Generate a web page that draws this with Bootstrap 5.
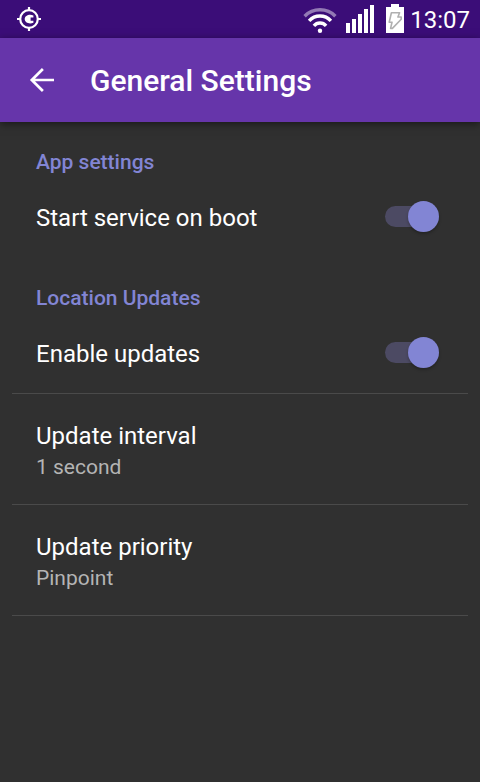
<!DOCTYPE html>
<html lang="en" data-bs-theme="dark">
<head>
<meta charset="utf-8">
<meta name="viewport" content="width=device-width, initial-scale=1">
<title>General Settings</title>
<link href="https://cdn.jsdelivr.net/npm/bootstrap@5.3.0/dist/css/bootstrap.min.css" rel="stylesheet">
<style>
  body { font-family: Roboto, "Noto Sans", sans-serif; background: #303030; color: #fff; }
  .status-bar { background: #3b0d78; height: 38px; padding: 0 10px 0 16px; }
  .status-icons { gap: 10px; }
  .wifi-signal { gap: 8px; }
  .battery-clock { gap: 5px; }
  .clock { font-size: 24px; line-height: 36px; padding-top: 2px; }
  .app-bar { background: #6635aa; height: 84px; padding: 0 28px; gap: 34px; box-shadow: 0 2px 8px rgba(0, 0, 0, .5); }
  .app-title { font-size: 30px; line-height: 36px; font-weight: 500; padding-top: 2px; }
  .back { color: #fff; line-height: 0; }
  .section-title { font-size: 21px; line-height: 30px; font-weight: 500; color: #8285d4; padding: 25px 24px 0; }
  .settings { padding: 0 12px; }
  .setting { border-bottom: 1px solid #4a4a4a; }
  .setting-last { border-color: transparent; }
  .toggle-row { min-height: 80px; padding: 0 29px 0 24px; }
  .toggle-row .setting-name { padding-top: 2px; }
  .setting-name { font-size: 24px; line-height: 32px; }
  .choice-row { padding: 26px 24px 22px; color: #fff; background: none; border: 0; }
  .choice-value { font-size: 21px; line-height: 30px; color: #b4b4b4; }
  .toggle { appearance: none; display: grid; align-items: center; width: 54px; height: 31px; margin: 0 0 2px; flex: none; }
  .toggle::before, .toggle::after { content: ""; grid-area: 1 / 1; }
  .toggle::before { width: 48px; height: 21px; border-radius: 11px; background: #4c4a63; }
  .toggle::after { width: 31px; height: 31px; border-radius: 50%; background: #8285d4; justify-self: end; box-shadow: 0 2px 3px rgba(0, 0, 0, .25); }
  .toggle:not(:checked)::after { justify-self: start; background: #bdbdbd; }
</style>
<script src="https://cdn.jsdelivr.net/npm/bootstrap@5.3.0/dist/js/bootstrap.bundle.min.js"></script>
</head>
<body>
<div class="status-bar d-flex align-items-center justify-content-between">
  <svg width="26" height="26" viewBox="0 0 26 26" fill="none" stroke="#fff" role="img" aria-label="Location active">
    <circle cx="13" cy="13" r="8.8" stroke-width="2.2"/>
    <path d="M13 1v4M13 21v4M1 13h4M21 13h4" stroke-width="2.2"/>
    <path d="M17.4 9.4C13.4 7.6 8.7 9.4 8.7 13.1S13.4 18.6 17.4 16.8V14.8H14.6V11.4H17.4Z" fill="#fff" stroke="none"/>
  </svg>
  <div class="status-icons d-flex align-items-center">
    <div class="wifi-signal d-flex align-items-center">
      <svg width="34" height="28" viewBox="0 0 34 28" fill="none" stroke="#fff" stroke-width="3.4" role="img" aria-label="Wi-Fi">
        <path d="M1.6 11.2C10 2.6 24 2.6 32.4 11.2" opacity=".45"/>
        <path d="M6.1 15.8C12 9.4 22 9.4 27.9 15.8M10.9 20.8C14.2 17 19.8 17 23.1 20.8"/>
        <circle cx="17" cy="25.8" r="2.2" fill="#fff" stroke="none"/>
      </svg>
      <svg width="30" height="28" viewBox="0 0 30 28" fill="#fff" role="img" aria-label="Signal">
        <path d="M1 18h4v10h-4zM7 14h4v14h-4zM13 9h4v19h-4zM19 4h4v24h-4zM25 0h4v28h-4z"/>
      </svg>
    </div>
    <div class="battery-clock d-flex align-items-center">
      <svg width="20" height="30" viewBox="0 0 20 30" role="img" aria-label="Battery charging">
        <path d="M6 0h8v3h5v26H1V3h5z" fill="#fff"/>
        <path d="M6.4 8.8H14.6L12.9 13H16.2V15.2L7.4 24.4H5.6L7 18.2H4.2Z" fill="none" stroke="#b0b0b0" stroke-width="1.6" stroke-linejoin="round"/>
      </svg>
      <span class="clock">13:07</span>
    </div>
  </div>
</div>
<header class="app-bar d-flex align-items-center">
  <a href="#" class="back" aria-label="Back">
    <svg width="28" height="28" viewBox="0 0 28 28" fill="none" stroke="currentColor" stroke-width="2.7"><path d="M26 14H4M14.9 3L3.8 14 14.9 25"/></svg>
  </a>
  <h1 class="app-title m-0">General Settings</h1>
</header>
<main class="settings">
  <section>
    <h2 class="section-title m-0">App settings</h2>
    <div class="setting setting-last">
      <div class="toggle-row d-flex align-items-center justify-content-between">
        <label class="setting-name" for="boot">Start service on boot</label>
        <input class="toggle" type="checkbox" role="switch" id="boot" checked>
      </div>
    </div>
  </section>
  <section>
    <h2 class="section-title m-0">Location Updates</h2>
    <div class="setting">
      <div class="toggle-row d-flex align-items-center justify-content-between">
        <label class="setting-name" for="updates">Enable updates</label>
        <input class="toggle" type="checkbox" role="switch" id="updates" checked>
      </div>
    </div>
    <div class="setting">
      <button type="button" class="choice-row w-100 text-start">
        <span class="setting-name d-block">Update interval</span>
        <span class="choice-value d-block">1 second</span>
      </button>
    </div>
    <div class="setting">
      <button type="button" class="choice-row w-100 text-start">
        <span class="setting-name d-block">Update priority</span>
        <span class="choice-value d-block">Pinpoint</span>
      </button>
    </div>
  </section>
</main>
</body>
</html>
